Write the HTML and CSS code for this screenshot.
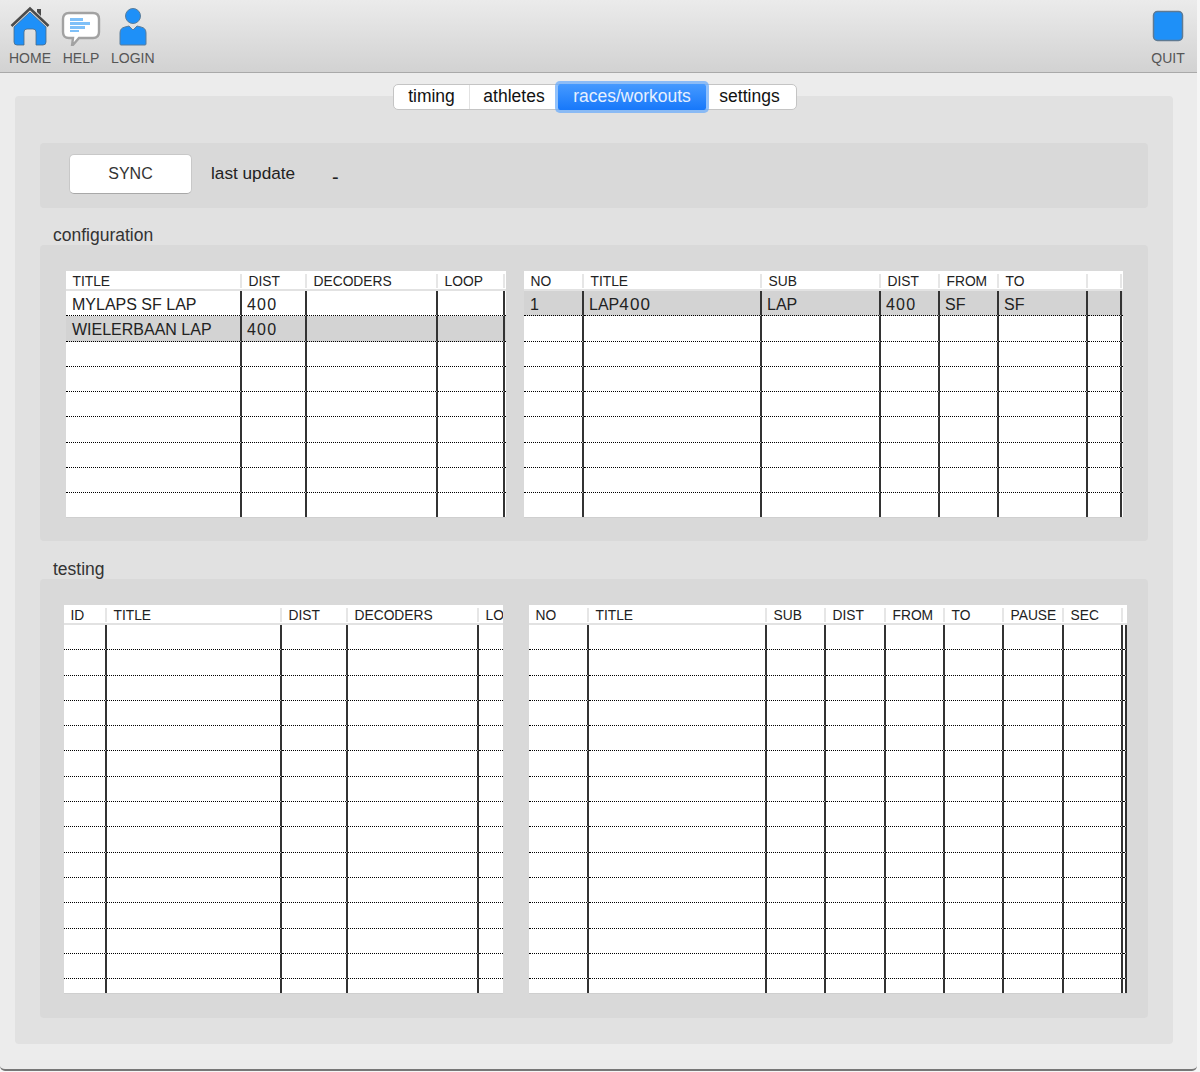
FILE: index.html
```html
<!DOCTYPE html>
<html lang="en">
<head>
  <meta charset="UTF-8">
  <meta name="viewport" content="width=device-width, initial-scale=1.0">
  <title>Timing</title>
  <link rel="stylesheet" href="styles.css">
</head>
<body>
  <div class="window">
    <header class="toolbar">
      <div class="tool">
        <svg class="tool-icon" width="40" height="40" viewBox="0 0 40 40">
          <path d="M4 21 20 6l16 15v15q0 3-3 3h-7V26q0-3-3-3h-6q-3 0-3 3v13H7q-3 0-3-3z" fill="#1e90f8" stroke="#4a6a86" stroke-width=".8"/>
          <path d="M1.500 20 20 2.500 38.500 20" fill="none" stroke="#4b4b4b" stroke-width="2.600"/>
          <path d="M27 6V3h4v7" fill="#4b4b4b"/>
        </svg>
        <span>HOME</span>
      </div>
      <div class="tool">
        <svg class="tool-icon" width="40" height="40" viewBox="0 0 40 40">
          <path d="M8 7h24q6 0 6 6v13q0 6-6 6H18l-7 8 1-8H8q-6 0-6-6V13q0-6 6-6z" fill="#fff" stroke="#a2a2a2" stroke-width="2.400"/>
          <path d="M9 12h13v3H9zM9 16h20v3H9zM9 20h15v3H9zM9 24h9v2H9z" fill="#7fc0f8"/>
        </svg>
        <span>HELP</span>
      </div>
      <div class="tool">
        <svg class="tool-icon" width="40" height="40" viewBox="0 0 40 40">
          <circle cx="20" cy="10" r="7.500" fill="#1e90f8" stroke="#5a7d9a"/>
          <path d="M7 38V27q0-5 5-6l4-1 4 4 4-4 4 1q5 1 5 6v11q0 1-1 1H8q-1 0-1-1z" fill="#1e90f8" stroke="#5a7d9a"/>
        </svg>
        <span>LOGIN</span>
      </div>
      <div class="tool tool-quit">
        <svg class="tool-icon" width="40" height="40" viewBox="0 0 40 40">
          <rect x="5.500" y="5.500" width="29" height="29" rx="4" fill="#1e90f8" stroke="#5f7a92" stroke-width="1.500"/>
        </svg>
        <span>QUIT</span>
      </div>
    </header>

    <main class="content">
      <nav class="tabs">
        <div class="tab tab-timing">timing</div>
        <div class="tab tab-athletes">athletes</div>
        <div class="tab tab-races active">races/workouts</div>
        <div class="tab tab-settings">settings</div>
      </nav>

      <div class="panel">
        <div class="sync-box">
          <button class="sync-btn">SYNC</button>
          <span class="sync-label">last update</span>
          <span class="sync-value">-</span>
        </div>

        <div class="section-title">configuration</div>
        <section class="group group-config">
          <div class="clip clip-tracks">
            <table class="grid tracks">
              <thead><tr><th>TITLE</th><th>DIST</th><th>DECODERS</th><th>LOOP</th><th></th></tr></thead>
              <tbody>
                <tr><td>MYLAPS SF LAP</td><td class="num">400</td><td></td><td></td><td></td></tr>
                <tr class="selected"><td>WIELERBAAN LAP</td><td class="num">400</td><td></td><td></td><td></td></tr>
                <tr><td></td><td></td><td></td><td></td><td></td></tr>
                <tr><td></td><td></td><td></td><td></td><td></td></tr>
                <tr><td></td><td></td><td></td><td></td><td></td></tr>
                <tr><td></td><td></td><td></td><td></td><td></td></tr>
                <tr><td></td><td></td><td></td><td></td><td></td></tr>
                <tr><td></td><td></td><td></td><td></td><td></td></tr>
                <tr><td></td><td></td><td></td><td></td><td></td></tr>
              </tbody>
            </table>
          </div>
          <div class="clip clip-segments">
            <table class="grid segments">
              <thead><tr><th>NO</th><th>TITLE</th><th>SUB</th><th>DIST</th><th>FROM</th><th>TO</th><th></th><th></th></tr></thead>
              <tbody>
                <tr class="selected"><td>1</td><td>LAP<span class="num">400</span></td><td>LAP</td><td class="num">400</td><td>SF</td><td>SF</td><td></td><td></td></tr>
                <tr><td></td><td></td><td></td><td></td><td></td><td></td><td></td><td></td></tr>
                <tr><td></td><td></td><td></td><td></td><td></td><td></td><td></td><td></td></tr>
                <tr><td></td><td></td><td></td><td></td><td></td><td></td><td></td><td></td></tr>
                <tr><td></td><td></td><td></td><td></td><td></td><td></td><td></td><td></td></tr>
                <tr><td></td><td></td><td></td><td></td><td></td><td></td><td></td><td></td></tr>
                <tr><td></td><td></td><td></td><td></td><td></td><td></td><td></td><td></td></tr>
                <tr><td></td><td></td><td></td><td></td><td></td><td></td><td></td><td></td></tr>
                <tr><td></td><td></td><td></td><td></td><td></td><td></td><td></td><td></td></tr>
              </tbody>
            </table>
          </div>
        </section>

        <div class="section-title">testing</div>
        <section class="group group-testing">
          <div class="clip clip-tests">
            <table class="grid tests">
              <thead><tr><th>ID</th><th>TITLE</th><th>DIST</th><th>DECODERS</th><th>LOOP</th></tr></thead>
              <tbody>
                <tr><td></td><td></td><td></td><td></td><td></td></tr>
                <tr><td></td><td></td><td></td><td></td><td></td></tr>
                <tr><td></td><td></td><td></td><td></td><td></td></tr>
                <tr><td></td><td></td><td></td><td></td><td></td></tr>
                <tr><td></td><td></td><td></td><td></td><td></td></tr>
                <tr><td></td><td></td><td></td><td></td><td></td></tr>
                <tr><td></td><td></td><td></td><td></td><td></td></tr>
                <tr><td></td><td></td><td></td><td></td><td></td></tr>
                <tr><td></td><td></td><td></td><td></td><td></td></tr>
                <tr><td></td><td></td><td></td><td></td><td></td></tr>
                <tr><td></td><td></td><td></td><td></td><td></td></tr>
                <tr><td></td><td></td><td></td><td></td><td></td></tr>
                <tr><td></td><td></td><td></td><td></td><td></td></tr>
                <tr><td></td><td></td><td></td><td></td><td></td></tr>
                <tr><td></td><td></td><td></td><td></td><td></td></tr>
              </tbody>
            </table>
          </div>
          <div class="clip clip-runs">
            <table class="grid runs">
              <thead><tr><th>NO</th><th>TITLE</th><th>SUB</th><th>DIST</th><th>FROM</th><th>TO</th><th>PAUSE</th><th>SEC</th><th></th></tr></thead>
              <tbody>
                <tr><td></td><td></td><td></td><td></td><td></td><td></td><td></td><td></td><td></td></tr>
                <tr><td></td><td></td><td></td><td></td><td></td><td></td><td></td><td></td><td></td></tr>
                <tr><td></td><td></td><td></td><td></td><td></td><td></td><td></td><td></td><td></td></tr>
                <tr><td></td><td></td><td></td><td></td><td></td><td></td><td></td><td></td><td></td></tr>
                <tr><td></td><td></td><td></td><td></td><td></td><td></td><td></td><td></td><td></td></tr>
                <tr><td></td><td></td><td></td><td></td><td></td><td></td><td></td><td></td><td></td></tr>
                <tr><td></td><td></td><td></td><td></td><td></td><td></td><td></td><td></td><td></td></tr>
                <tr><td></td><td></td><td></td><td></td><td></td><td></td><td></td><td></td><td></td></tr>
                <tr><td></td><td></td><td></td><td></td><td></td><td></td><td></td><td></td><td></td></tr>
                <tr><td></td><td></td><td></td><td></td><td></td><td></td><td></td><td></td><td></td></tr>
                <tr><td></td><td></td><td></td><td></td><td></td><td></td><td></td><td></td><td></td></tr>
                <tr><td></td><td></td><td></td><td></td><td></td><td></td><td></td><td></td><td></td></tr>
                <tr><td></td><td></td><td></td><td></td><td></td><td></td><td></td><td></td><td></td></tr>
                <tr><td></td><td></td><td></td><td></td><td></td><td></td><td></td><td></td><td></td></tr>
                <tr><td></td><td></td><td></td><td></td><td></td><td></td><td></td><td></td><td></td></tr>
              </tbody>
            </table>
          </div>
        </section>
      </div>
    </main>
  </div>
</body>
</html>
```

FILE: styles.css
```css
/* General Reset */
* {
  margin: 0;
  padding: 0;
  box-sizing: border-box;
}

body {
  font-family: "Liberation Sans", Arial, sans-serif;
  background-color: #f6f6f6;
  color: #222;
  overflow: hidden;
}

.window {
  width: 1197px;
  height: 1071px;
  background-color: #ececec;
  border-bottom: 2px solid #777;
  border-radius: 0 0 5px 5px;
  overflow: hidden;
}

/* Toolbar */
.toolbar {
  display: flex;
  gap: 10px;
  height: 73px;
  padding: 6px 9px 0 9px;
  background: linear-gradient(#ebebeb, #d2d2d2);
  border-bottom: 1px solid #a9a9a9;
}

.tool {
  display: flex;
  flex-direction: column;
  align-items: center;
  font-size: 14px;
  color: #555;
}

.tool-icon {
  display: block;
  margin-bottom: 4px;
}

.tool-quit {
  margin-left: auto;
}

/* Tabs */
.content {
  padding: 11px 24px 0 15px;
}

.tabs {
  position: relative;
  z-index: 1;
  display: flex;
  width: 404px;
  height: 26px;
  margin: 0 0 -14px 378px;
  background: #fff;
  border: 1px solid #c4c4c4;
  border-radius: 5px;
}

.tab {
  text-align: center;
  font-size: 17.500px;
  line-height: 23px;
  color: #111;
}

.tab-timing {
  width: 76px;
  border-right: 1px solid #e2e2e2;
}

.tab-athletes {
  width: 88px;
}

.tab-races {
  width: 148px;
  margin: -1px 0;
  height: 26px;
  line-height: 25px;
}

.tab-settings {
  flex: 1;
  padding-right: 3px;
}

.tab.active {
  background: linear-gradient(#469aff, #1778fa);
  color: #e6f0ff;
  border-radius: 2px;
  box-shadow: 0 0 0 3px rgba(108, 172, 250, 0.75);
}

/* Panels */
.panel {
  height: 948px;
  padding: 47px 25px 0;
  background-color: #e1e1e1;
  border-radius: 4px;
}

.sync-box {
  display: flex;
  align-items: center;
  height: 65px;
  padding: 0 0 3px 29px;
  background-color: #d9d9d9;
  border-radius: 4px;
}

.sync-btn {
  width: 123px;
  height: 40px;
  font-family: inherit;
  font-size: 16px;
  color: #333;
  background: #fff;
  border: 1px solid #c8c8c8;
  border-bottom-color: #a8a8a8;
  border-radius: 5px;
}

.sync-label {
  width: 121px;
  margin: 0 0 2px 19px;
  font-size: 17.200px;
  color: #222;
}

.sync-value {
  font-size: 20px;
  padding-top: 7px;
}

.section-title {
  height: 37px;
  padding: 18px 0 0 13px;
  font-size: 17.500px;
  line-height: 19px;
  color: #333;
}

.group {
  display: flex;
  background-color: #d9d9d9;
  border-radius: 4px;
}

.group-config {
  gap: 18px;
  height: 296px;
  margin-bottom: 1px;
  padding: 26px 0 0 26px;
}

.group-testing {
  gap: 26px;
  height: 439px;
  padding: 26px 0 0 24px;
}

/* Tables */
.clip {
  overflow: hidden;
  background: #fff;
  border-bottom: 1px solid #cfcfcf;
}

.clip-tracks { width: 440px; height: 247px; }
.clip-segments { width: 599px; height: 247px; }
.clip-tests { width: 439px; height: 389px; }
.clip-runs { width: 598px; height: 389px; }

.grid {
  width: 100%;
  table-layout: fixed;
  border-collapse: separate;
  border-spacing: 0;
}

.grid th {
  height: 20px;
  padding: 2px 0 0 6.500px;
  overflow: hidden;
  white-space: nowrap;
  text-align: left;
  font-size: 13.800px;
  font-weight: normal;
  color: #222;
  border-bottom: 2px solid #e2e2e2;
  background: linear-gradient(#e6e6e6, #e6e6e6) right 3px / 2px 14px no-repeat;
}

.grid td {
  height: 25.300px;
  padding: 3px 0 0 5px;
  white-space: nowrap;
  overflow: hidden;
  font-size: 16px;
  color: #222;
  border-right: 2px solid #333;
  border-bottom: 1px dotted #000;
}

.grid td:first-child {
  padding-left: 6px;
}

.num {
  font-size: 17px;
  letter-spacing: 1.200px;
}

.grid .selected td {
  background-color: #d3d3d3;
}

.grid th:last-child,
.grid td:last-child {
  background-image: none;
  border-right: none;
}

.runs td:last-child {
  border-right: 2px solid #333;
}

/* Column widths */
.tracks th:nth-child(1) { width: 176px; }
.tracks th:nth-child(2) { width: 65px; }
.tracks th:nth-child(3) { width: 131px; }
.tracks th:nth-child(4) { width: 67px; }

.segments th:nth-child(1) { width: 60px; }
.segments th:nth-child(2) { width: 178px; }
.segments th:nth-child(3) { width: 119px; }
.segments th:nth-child(4) { width: 59px; }
.segments th:nth-child(5) { width: 59px; }
.segments th:nth-child(6) { width: 89px; }
.segments th:nth-child(7) { width: 34px; }

.tests th:nth-child(1) { width: 43px; }
.tests th:nth-child(2) { width: 175px; }
.tests th:nth-child(3) { width: 66px; }
.tests th:nth-child(4) { width: 131px; }

.runs th:nth-child(1) { width: 60px; }
.runs th:nth-child(2) { width: 178px; }
.runs th:nth-child(3) { width: 59px; }
.runs th:nth-child(4) { width: 60px; }
.runs th:nth-child(5) { width: 59px; }
.runs th:nth-child(6) { width: 59px; }
.runs th:nth-child(7) { width: 60px; }
.runs th:nth-child(8) { width: 59px; }
```
